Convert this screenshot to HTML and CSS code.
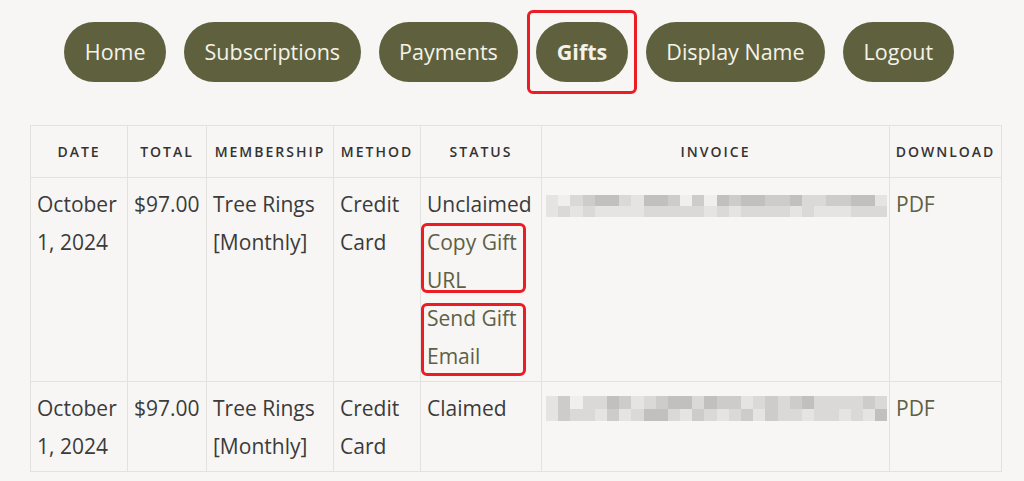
FILE: index.html
```html
<!DOCTYPE html>
<html lang="en">
<head>
	<meta charset="UTF-8">
	<title>Gifts</title>
	<link rel="stylesheet" href="styles.css">
	<script>
	document.addEventListener('DOMContentLoaded',()=>{
		// 发票号打码：每格一个灰度等级
		var rows = {
			a: ['1023442144303043443342233441', '1212111122222121222212111222'],
			b: ['1302243123442433123234222232', '1322131244213212313221221214']
		};
		var boxes = document.querySelectorAll('.blur');
		for(var i=0;i<boxes.length;i++){
			var data = rows[boxes[i].dataset.key];
			for(var r=0;r<data.length;r++){
				for(var c=0;c<data[r].length;c++){
					var span = document.createElement('span');
					span.className = 'g' + data[r][c];
					boxes[i].appendChild(span);
				}
			}
		}
	});
	</script>
</head>
<body>
	<nav class="nav">
		<a href="#">Home</a>
		<a href="#">Subscriptions</a>
		<a href="#">Payments</a>
		<a href="#" class="current">Gifts</a>
		<a href="#">Display Name</a>
		<a href="#">Logout</a>
	</nav>

	<div class="wrap">
		<table class="orders">
			<colgroup>
				<col style="width:97px">
				<col style="width:79px">
				<col style="width:127px">
				<col style="width:87px">
				<col style="width:121px">
				<col style="width:348px">
				<col style="width:112px">
			</colgroup>
			<thead>
				<tr>
					<th>Date</th>
					<th>Total</th>
					<th>Membership</th>
					<th>Method</th>
					<th>Status</th>
					<th>Invoice</th>
					<th>Download</th>
				</tr>
			</thead>
			<tbody>
				<tr>
					<td>October 1, 2024</td>
					<td>$97.00</td>
					<td>Tree Rings [Monthly]</td>
					<td>Credit Card</td>
					<td>
						Unclaimed
						<a href="#" class="mark">Copy Gift URL</a>
						<a href="#" class="mark second">Send Gift Email</a>
					</td>
					<td><div class="blur" data-key="a"></div></td>
					<td><a href="#">PDF</a></td>
				</tr>
				<tr>
					<td>October 1, 2024</td>
					<td>$97.00</td>
					<td>Tree Rings [Monthly]</td>
					<td>Credit Card</td>
					<td>Claimed</td>
					<td><div class="blur tall" data-key="b"></div></td>
					<td><a href="#">PDF</a></td>
				</tr>
			</tbody>
		</table>
	</div>
</body>
</html>
```

FILE: styles.css
```css
body{margin:0;background:#f7f6f4;font-family:"Open Sans","Noto Sans",sans-serif;color:#3b3b3b;}
a{color:#5e6045;text-decoration:none;}

.nav{display:flex;justify-content:center;gap:18px;padding:22px 0 0 0;margin-left:-6px;}
.nav a{display:block;height:60px;line-height:60px;padding:0 20.5px;border-radius:30px;background:#5f613e;color:#f5f2e8;font-size:21.5px;}
.nav a.current{position:relative;font-weight:700;}
.nav a.current::after{content:"";position:absolute;left:-9px;right:-9px;top:-12px;bottom:-12px;border:3px solid #ec1c24;border-radius:6px;}

.wrap{padding:43px 0 0 30px;}
.orders{table-layout:fixed;width:971px;border-collapse:collapse;}
.orders th,.orders td{border:1px solid #e4e2de;}
.orders th{height:51px;padding:0;font-size:14px;font-weight:600;letter-spacing:2px;text-transform:uppercase;color:#333;text-align:center;}
.orders td{padding:7px 6px 6px 6px;font-size:21px;line-height:38px;vertical-align:top;text-align:left;}

.mark{position:relative;display:block;}
.mark::after{content:"";position:absolute;left:-6px;right:9px;top:0;bottom:6px;border:3px solid #ec1c24;border-radius:6px;}
.mark.second::after{top:4px;bottom:-1px;}

.blur{display:grid;grid-template-columns:repeat(28,12.2px);grid-auto-rows:11px;margin:10px 0 0 -2px;}
.blur.tall{grid-auto-rows:12.5px;margin-top:7px;}
.blur span{display:block;}
.g0{background:#f0efed;}
.g1{background:#e5e4e2;}
.g2{background:#dad9d7;}
.g3{background:#cdcccb;}
.g4{background:#c1c0bf;}
```
